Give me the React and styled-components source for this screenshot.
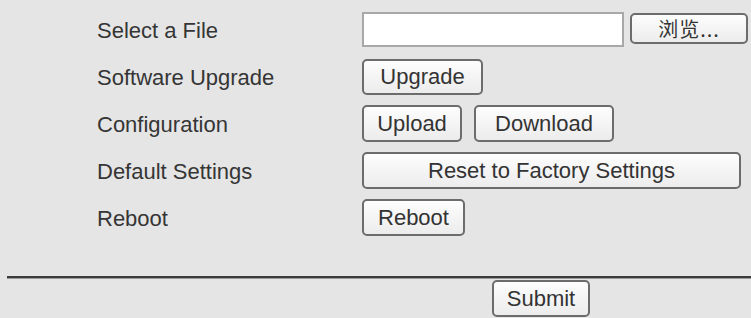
import React from 'react';
import styled, { createGlobalStyle } from 'styled-components';

const Global = createGlobalStyle`
  html, body {
    margin: 0;
    padding: 0;
    background: #e5e5e5;
  }
  body {
    font-family: "Liberation Sans", Arial, sans-serif;
    color: #333;
  }
`;

const Page = styled.div`
  width: 751px;
  height: 318px;
  overflow: hidden;
  background: #e5e5e5;
`;

const Form = styled.div`
  display: grid;
  grid-template-columns: 265px 1fr;
  grid-auto-rows: 37px;
  align-content: start;
  row-gap: 10px;
  padding: 11px 0 0 97px;
  height: 276px;
  box-sizing: border-box;
`;

const Label = styled.div`
  display: flex;
  align-items: center;
  font-size: 22px;
  color: #353535;
  padding-top: 3px;
`;

const Controls = styled.div`
  display: flex;
  align-items: center;
  gap: ${(p) => p.gap || 12}px;
`;

const FileInput = styled.div`
  width: 262px;
  height: 35px;
  box-sizing: border-box;
  background: #fff;
  border: 2px solid #a8a8a8;
`;

const Button = styled.button`
  width: ${(p) => p.w}px;
  height: ${(p) => p.h || 37}px;
  box-sizing: border-box;
  padding: 0;
  border: 2px solid #6c6c6c;
  border-radius: 5px;
  background: linear-gradient(#fdfdfd, #ececec);
  color: #333;
  font-family: "Liberation Sans", Arial, sans-serif;
  font-size: 22px;
  display: flex;
  align-items: center;
  justify-content: center;
  outline: 0;
`;

const BrowseButton = styled(Button)`
  font-family: "Noto Sans CJK SC", "Liberation Serif", serif;
  font-size: 20px;
  letter-spacing: 1px;
  margin-bottom: 3px;
`;

const Divider = styled.div`
  margin-left: 7px;
  height: 2px;
  background: #3c3c3c;
  box-shadow: 0 1px 0 #9a9a9a;
`;

const Footer = styled.div`
  display: flex;
  padding: 2px 0 0 492px;
`;

export default function App() {
  return (
    <Page>
      <Global />
      <Form>
        <Label>Select a File</Label>
        <Controls gap={6}>
          <FileInput />
          <BrowseButton w={118} h={31}>浏览...</BrowseButton>
        </Controls>

        <Label>Software Upgrade</Label>
        <Controls>
          <Button w={121} h={36}>Upgrade</Button>
        </Controls>

        <Label>Configuration</Label>
        <Controls>
          <Button w={100}>Upload</Button>
          <Button w={140}>Download</Button>
        </Controls>

        <Label>Default Settings</Label>
        <Controls>
          <Button w={379}>Reset to Factory Settings</Button>
        </Controls>

        <Label>Reboot</Label>
        <Controls>
          <Button w={103}>Reboot</Button>
        </Controls>
      </Form>
      <Divider />
      <Footer>
        <Button w={98}>Submit</Button>
      </Footer>
    </Page>
  );
}
